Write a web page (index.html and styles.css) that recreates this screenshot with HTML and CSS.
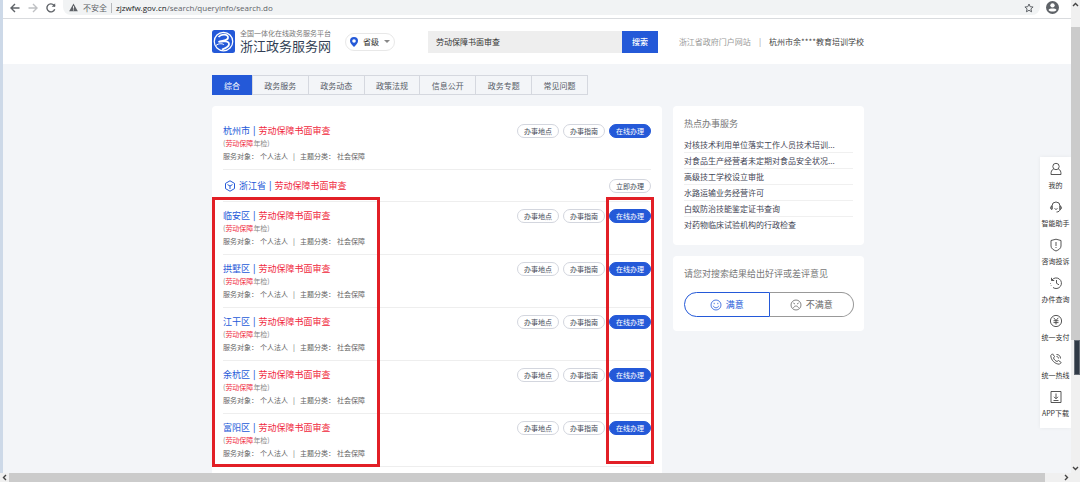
FILE: index.html
```
<!DOCTYPE html>
<html lang="zh-CN">
<head>
    <meta charset="UTF-8">
    <meta name="viewport" content="width=device-width, initial-scale=1.0">
    <title>浙江政务服务网</title>
    <link rel="stylesheet" href="styles.css">
</head>
<body>
    <div class="window">
        <div class="toolbar">
            <button class="nav-btn" aria-label="后退"><svg viewBox="0 0 12 12"><path d="M10.5 6H2M6 2L2 6l4 4"/></svg></button>
            <button class="nav-btn disabled" aria-label="前进"><svg viewBox="0 0 12 12"><path d="M1.500 6H10M6 2l4 4-4 4"/></svg></button>
            <button class="nav-btn" aria-label="刷新"><svg viewBox="0 0 12 12"><path d="M9.700 7.200A4 4 0 1 1 8.900 3.200L10 4.300"/><path d="M10.200 1.300v3.500H6.700z" class="solid"/></svg></button>
            <div class="address">
                <svg class="warn" viewBox="0 0 10 10"><path d="M5 .6L9.800 9.300H.2z" fill="#5f6368"/><path d="M5 3.500v2.800M5 7.200v1.100" stroke="#fff" stroke-width="1"/></svg>
                <span class="unsafe">不安全</span>
                <span class="url"><b>zjzwfw.gov.cn</b>/search/queryinfo/search.do</span>
                <svg class="star" viewBox="0 0 10 10"><path d="M5 1l1.200 2.700 2.900.3-2.200 1.900.7 2.900L5 7.300 2.400 8.800l.7-2.900L.9 4l2.900-.3z"/></svg>
            </div>
            <svg class="avatar" viewBox="0 0 12 12"><circle cx="6" cy="6" r="6" fill="#5f6368"/><circle cx="6" cy="4" r="2" fill="#fff"/><path d="M2.300 8.300C3 6.600 9 6.600 9.700 8.300 8.400 10.300 3.600 10.300 2.300 8.300z" fill="#fff"/></svg>
        </div>

        <div class="page">
            <header class="header">
                <div class="container header-inner">
                    <a class="logo" href="#">
                        <svg class="logo-mark" viewBox="0 0 46 46">
                            <rect width="46" height="46" rx="5" fill="#2459d8"/>
                            <circle cx="23" cy="23" r="18.500" fill="none" stroke="#fff" stroke-width="2.500"/>
                            <path d="M13 14C20 6 33 9 32 16c-1 6-14 5-19 8 8-2 22-3 21 5-1 6-9 8-14 10" fill="none" stroke="#fff" stroke-width="3.500"/>
                            <path d="M8 31c5-5 15-4 16-1" fill="none" stroke="#fff" stroke-width="2"/>
                        </svg>
                        <span class="logo-text">
                            <small>全国一体化在线政务服务平台</small>
                            <strong>浙江政务服务网</strong>
                        </span>
                    </a>
                    <button class="region">
                        <svg class="pin" viewBox="0 0 8 10"><path d="M4 0a4 4 0 0 0-4 4c0 2 2 4 4 6 2-2 4-4 4-6a4 4 0 0 0-4-4z" fill="#2459d8"/><circle cx="4" cy="4" r="1.800" fill="#fff"/></svg>
                        省级
                        <span class="caret"></span>
                    </button>
                    <form class="search">
                        <input type="text" value="劳动保障书面审查" aria-label="搜索内容">
                        <button type="button">搜索</button>
                    </form>
                    <div class="user-links">
                        <a href="#">浙江省政府门户网站</a>
                        <span>|</span>
                        <a class="user-name" href="#">杭州市余****教育培训学校</a>
                    </div>
                </div>
            </header>

            <main class="container">
                <nav class="tabs">
                    <a class="active" href="#">综合</a>
                    <a href="#">政务服务</a>
                    <a href="#">政务动态</a>
                    <a href="#">政策法规</a>
                    <a href="#">信息公开</a>
                    <a href="#">政务专题</a>
                    <a href="#">常见问题</a>
                </nav>

                <div class="columns">
                    <section class="card results">
                        <article class="item">
                            <div class="info">
                                <h3>杭州市 <i>|</i> <em>劳动保障书面审查</em></h3>
                                <p class="alias">(<em>劳动保障</em>年检)</p>
                                <p class="meta"><span>服务对象：</span><span>个人法人</span><span class="sep">|</span><span>主题分类：</span><span>社会保障</span></p>
                            </div>
                            <div class="actions"><button>办事地点</button><button>办事指南</button><button class="primary">在线办理</button></div>
                        </article>
                        <article class="item province">
                            <h3><svg class="cube" viewBox="0 0 12 12"><path d="M6 .8l4.500 2.600v5.200L6 11.200 1.500 8.600V3.400z"/><path d="M3.500 4.600L6 6l2.500-1.400M6 6v3"/></svg>浙江省 <i>|</i> <em>劳动保障书面审查</em></h3>
                            <div class="actions"><button>立即办理</button></div>
                        </article>

                        <div class="districts">
                            <article class="item">
                                <div class="info">
                                    <h3>临安区 <i>|</i> <em>劳动保障书面审查</em></h3>
                                    <p class="alias">(<em>劳动保障</em>年检)</p>
                                    <p class="meta"><span>服务对象：</span><span>个人法人</span><span class="sep">|</span><span>主题分类：</span><span>社会保障</span></p>
                                </div>
                                <div class="actions"><button>办事地点</button><button>办事指南</button><button class="primary">在线办理</button></div>
                            </article>
                            <article class="item">
                                <div class="info">
                                    <h3>拱墅区 <i>|</i> <em>劳动保障书面审查</em></h3>
                                    <p class="alias">(<em>劳动保障</em>年检)</p>
                                    <p class="meta"><span>服务对象：</span><span>个人法人</span><span class="sep">|</span><span>主题分类：</span><span>社会保障</span></p>
                                </div>
                                <div class="actions"><button>办事地点</button><button>办事指南</button><button class="primary">在线办理</button></div>
                            </article>
                            <article class="item">
                                <div class="info">
                                    <h3>江干区 <i>|</i> <em>劳动保障书面审查</em></h3>
                                    <p class="alias">(<em>劳动保障</em>年检)</p>
                                    <p class="meta"><span>服务对象：</span><span>个人法人</span><span class="sep">|</span><span>主题分类：</span><span>社会保障</span></p>
                                </div>
                                <div class="actions"><button>办事地点</button><button>办事指南</button><button class="primary">在线办理</button></div>
                            </article>
                            <article class="item">
                                <div class="info">
                                    <h3>余杭区 <i>|</i> <em>劳动保障书面审查</em></h3>
                                    <p class="alias">(<em>劳动保障</em>年检)</p>
                                    <p class="meta"><span>服务对象：</span><span>个人法人</span><span class="sep">|</span><span>主题分类：</span><span>社会保障</span></p>
                                </div>
                                <div class="actions"><button>办事地点</button><button>办事指南</button><button class="primary">在线办理</button></div>
                            </article>
                            <article class="item">
                                <div class="info">
                                    <h3>富阳区 <i>|</i> <em>劳动保障书面审查</em></h3>
                                    <p class="alias">(<em>劳动保障</em>年检)</p>
                                    <p class="meta"><span>服务对象：</span><span>个人法人</span><span class="sep">|</span><span>主题分类：</span><span>社会保障</span></p>
                                </div>
                                <div class="actions"><button>办事地点</button><button>办事指南</button><button class="primary">在线办理</button></div>
                            </article>
                            <div class="mark mark-names"></div>
                            <div class="mark mark-actions"></div>
                        </div>
                    </section>

                    <aside class="sidebar">
                        <section class="card hot">
                            <h2>热点办事服务</h2>
                            <ul>
                                <li><a href="#">对核技术利用单位落实工作人员技术培训...</a></li>
                                <li><a href="#">对食品生产经营者未定期对食品安全状况...</a></li>
                                <li><a href="#">高级技工学校设立审批</a></li>
                                <li><a href="#">水路运输业务经营许可</a></li>
                                <li><a href="#">白蚁防治技能鉴定证书查询</a></li>
                                <li><a href="#">对药物临床试验机构的行政检查</a></li>
                            </ul>
                        </section>
                        <section class="card feedback">
                            <h2>请您对搜索结果给出好评或差评意见</h2>
                            <div class="votes">
                                <button class="good"><svg viewBox="0 0 12 12"><circle cx="6" cy="6" r="5"/><path d="M4.200 3.800v1.400M7.800 3.800v1.400M3.300 6.800c.7 2.600 4.700 2.600 5.400 0"/></svg>满意</button>
                                <button class="bad"><svg viewBox="0 0 12 12"><circle cx="6" cy="6" r="5"/><path d="M3.300 4l1.700 1M8.700 4L7 5M3.500 8.800c.7-2.400 4.300-2.400 5 0"/></svg>不满意</button>
                            </div>
                        </section>
                    </aside>
                </div>
            </main>

            <nav class="side-tools">
                <a href="#"><svg viewBox="0 0 14 14"><circle cx="7" cy="4.500" r="3.200"/><path d="M4.600 7C2.500 8 2 9.500 2 12.500h10C12 9.500 11.500 8 9.400 7"/></svg>我的</a>
                <a href="#"><svg viewBox="0 0 14 14"><path d="M3 9V6a4 4 0 0 1 8 0v3c0 2-1.500 3-3.500 3M3 6C1 6 1 9.500 3 9.500zM11 6c2 0 2 3.500 0 3.500zM5.500 8.500c.8 1 2.200 1 3 0"/></svg>智能助手</a>
                <a href="#"><svg viewBox="0 0 14 14"><path d="M7 1.200l5 1.300V8c0 2.500-2.500 4-5 5-2.500-1-5-2.500-5-5V2.500zM7 4v4M7 9v1"/></svg>咨询投诉</a>
                <a href="#"><svg viewBox="0 0 14 14"><path d="M2.800 4.200A5.300 5.300 0 1 1 4 11.500M2.500 1.800v2.700h2.700M7.500 4v3.300l2.500 1.500M1.500 7v.6M2 9.300l.4.500"/></svg>办件查询</a>
                <a href="#"><svg viewBox="0 0 14 14"><circle cx="7" cy="7" r="5.600"/><path d="M4.700 3.800L7 6.500l2.300-2.700M7 6.500v4M4.500 6.700h5M4.500 8.600h5"/></svg>统一支付</a>
                <a href="#"><svg viewBox="0 0 14 14"><path d="M3.500 1.800L1.800 3.500C1.800 8 6 12.200 10.500 12.200l1.700-1.700-2.700-2-1.500 1C6.500 9 5 7.500 4.500 6l1-1.500zM7.500 4.500c1.200 0 2 .8 2 2M7.500 2.500c2.500 0 4 1.500 4 4"/></svg>统一热线</a>
                <a href="#"><svg viewBox="0 0 14 14"><path d="M2 1.500h10v11H2zM7 3.500v5M5 6.800l2 2 2-2M4.500 10.500h5"/></svg>APP下载</a>
            </nav>
        </div>
    </div>

    <div class="vscroll">
        <svg viewBox="0 0 9 9"><path d="M2 6l2.500-2.500L7 6"/></svg>
        <div class="vthumb"></div>
        <div class="grip"></div>
        <div class="vrest"></div>
        <svg viewBox="0 0 9 9"><path d="M2 3l2.500 2.500L7 3"/></svg>
    </div>
    <div class="hscroll">
        <svg viewBox="0 0 9 9"><path d="M6 2L3.500 4.500 6 7"/></svg>
        <div class="hthumb"></div>
        <svg viewBox="0 0 9 9"><path d="M3 2l2.500 2.500L3 7"/></svg>
    </div>
</body>
</html>
```
FILE: styles.css
```
* {
    box-sizing: border-box;
}

body {
    margin: 0;
    height: 100vh;
    overflow: hidden;
    display: grid;
    grid-template-columns: 1fr 9px;
    grid-template-rows: minmax(0, 1fr) 9px;
    font-family: "Noto Sans CJK SC", "Noto Sans", sans-serif;
    font-size: 8px;
    color: #555b66;
    background-color: #f0f0f0;
}

h2, h3, p, ul {
    margin: 0;
    padding: 0;
    font-weight: normal;
}

em, i {
    font-style: normal;
}

a {
    color: inherit;
    text-decoration: none;
}

button, input {
    font: inherit;
    color: inherit;
    border: none;
    padding: 0;
    margin: 0;
    background: none;
}

svg {
    flex: none;
    fill: none;
}

/* browser window */
.window {
    display: flex;
    flex-direction: column;
    min-height: 0;
    border-left: 3px solid #cdd9e8;
}

.toolbar {
    flex: none;
    display: flex;
    align-items: flex-start;
    gap: 6px;
    height: 19px;
    padding: 0 12px 0 6px;
    background-color: #fff;
    border-bottom: 1px solid #d9dbde;
}

.nav-btn {
    width: 12px;
    height: 15px;
}

.nav-btn svg {
    display: block;
    width: 12px;
    height: 12px;
    stroke: #5f6368;
    stroke-width: 1.4;
}

.nav-btn.disabled svg {
    stroke: #bfc1c4;
}

.nav-btn .solid {
    fill: #5f6368;
    stroke: none;
}

.address {
    flex: 1;
    display: flex;
    align-items: center;
    height: 15px;
    padding: 0 6px;
    border-radius: 0 0 8px 8px;
    background-color: #f1f3f4;
    color: #5f6368;
}

.warn {
    width: 9px;
    height: 9px;
}

.unsafe {
    margin-left: 5px;
    padding-right: 4px;
    line-height: 10px;
    border-right: 1px solid #b5b8bc;
}

.url {
    margin-left: 4px;
    font-family: "Open Sans", "Noto Sans", sans-serif;
    font-size: 8px;
}

.url b {
    font-weight: normal;
    color: #202124;
}

.star {
    width: 10px;
    height: 10px;
    margin-left: auto;
    stroke: #5f6368;
}

.avatar {
    width: 13px;
    height: 13px;
    margin-top: 1px;
}

.page {
    position: relative;
    flex: 1;
    min-height: 0;
    overflow: hidden;
    background-color: #f3f5f8;
}

.container {
    width: 654px;
    max-width: 100%;
    margin: 0 auto;
    padding-left: 2px;
}

/* site header */
.header {
    background-color: #fff;
}

.header-inner {
    display: flex;
    align-items: center;
    height: 45px;
}

.logo {
    display: flex;
    align-items: center;
    gap: 5px;
}

.logo-mark {
    width: 23px;
    height: 23px;
}

.logo-text {
    display: flex;
    flex-direction: column;
}

.logo-text small {
    font-size: 7px;
    line-height: 9px;
    color: #777;
}

.logo-text strong {
    font-size: 13px;
    line-height: 16px;
    font-weight: 400;
    color: #333f55;
}

.region {
    display: flex;
    align-items: center;
    gap: 5px;
    height: 18px;
    margin-left: 14px;
    padding: 0 4px;
    border: 1px solid #e8e8e8;
    border-radius: 9px;
    color: #333;
}

.pin {
    width: 8px;
    height: 10px;
}

.caret {
    border: 3px solid transparent;
    border-top-color: #888;
    border-bottom: none;
}

.search {
    display: flex;
    width: 230px;
    height: 22px;
    margin-left: 33px;
}

.search input {
    flex: 1;
    min-width: 0;
    padding: 0 8px;
    background-color: #eee;
    color: #333;
}

.search button {
    width: 36px;
    background-color: #2459d8;
    color: #fff;
    font-weight: 500;
}

.user-links {
    display: flex;
    gap: 8px;
    margin-left: auto;
    color: #999;
    white-space: nowrap;
}

.user-name {
    color: #444;
}

/* tabs */
.tabs {
    display: flex;
    width: 376px;
    height: 20px;
    margin-top: 11px;
    border: 1px solid #d5d8df;
}

.tabs a {
    width: 56px;
    line-height: 20px;
    text-align: center;
    border-left: 1px solid #d5d8df;
}

.tabs .active {
    width: 40px;
    margin: -1px 0 -1px -1px;
    line-height: 22px;
    border-left: none;
    background-color: #2459d8;
    color: #fff;
}

.columns {
    display: grid;
    grid-template-columns: 1fr 191px;
    align-items: start;
    gap: 11px;
    margin-top: 11px;
}

.card {
    padding: 11px;
    background-color: #fff;
    border-radius: 4px;
}

/* search results */
.results {
    padding-bottom: 40px;
}

.item {
    display: flex;
    justify-content: space-between;
    align-items: flex-start;
    height: 53px;
    padding-top: 6px;
    border-bottom: 1px solid #eee;
}

.item h3 {
    font-size: 9px;
    line-height: 16px;
    color: #2459d8;
}

.item i {
    font-weight: 500;
}

.info i {
    margin: 0 1px;
}

.item em {
    color: #f0283c;
}

.alias {
    font-size: 7px;
    line-height: 8px;
    color: #888;
}

.meta {
    display: flex;
    gap: 2px;
    font-size: 7px;
    line-height: 18px;
    color: #666;
}

.meta .sep {
    margin: 0 3px;
}

.actions {
    display: flex;
    gap: 4px;
}

.actions button {
    width: 42px;
    height: 14px;
    margin-top: 1px;
    border: 1px solid #d3d6de;
    border-radius: 7px;
    font-size: 7px;
    line-height: 12px;
    color: #444a57;
}

.actions .primary {
    border-color: #2459d8;
    background-color: #2459d8;
    color: #fff;
}

.province {
    align-items: center;
    height: 32px;
    padding: 0;
}

.province h3 {
    display: flex;
    align-items: center;
    gap: 3px;
    padding-left: 1px;
}

.cube {
    width: 12px;
    height: 12px;
    stroke: #2459d8;
}

.districts {
    position: relative;
}

.mark {
    position: absolute;
    top: -5px;
    border: 3px solid #e21f26;
    pointer-events: none;
}

.mark-names {
    left: -11px;
    bottom: 0;
    width: 168px;
}

.mark-actions {
    right: -3px;
    bottom: 3px;
    width: 48px;
}

/* right column */
.sidebar {
    display: grid;
    gap: 11px;
}

.card h2 {
    font-size: 9px;
    line-height: 14px;
    color: #777;
}

.hot {
    padding-bottom: 13px;
}

.hot ul {
    list-style: none;
    margin-top: 6px;
}

.hot li {
    line-height: 15px;
    border-bottom: 1px solid #f0f0f0;
    white-space: nowrap;
    color: #3f4454;
}

.hot li:last-child {
    border-bottom: none;
}

.votes {
    display: flex;
    height: 25px;
    margin: 11px -1px 3px 0;
}

.votes button {
    flex: 1;
    display: flex;
    align-items: center;
    justify-content: center;
    gap: 4px;
    border: 1px solid #999;
    font-size: 9px;
    color: #666;
}

.votes svg {
    width: 12px;
    height: 12px;
    stroke: currentColor;
    stroke-width: 0.8;
}

.votes .good {
    border-color: #2459d8;
    border-radius: 13px 0 0 13px;
    color: #2459d8;
}

.votes .bad {
    border-left: none;
    border-radius: 0 13px 13px 0;
}

/* floating tools over the page edge */
.side-tools {
    position: absolute;
    top: 138px;
    right: 0;
    width: 31px;
    padding-top: 5px;
    background-color: #fff;
    box-shadow: 0 0 4px rgba(0, 0, 0, 0.06);
}

.side-tools a {
    display: flex;
    flex-direction: column;
    align-items: center;
    height: 38px;
    font-size: 7px;
    line-height: 14px;
    color: #333;
    white-space: nowrap;
}

.side-tools svg {
    width: 14px;
    height: 14px;
    margin-bottom: 2px;
    stroke: #444;
    stroke-width: 0.9;
}

/* scrollbars */
.vscroll {
    display: flex;
    flex-direction: column;
    align-items: stretch;
}

.vscroll svg, .hscroll svg {
    width: 9px;
    height: 9px;
    stroke: #444;
    stroke-width: 1.4;
}

.vthumb {
    flex: 314;
    margin-top: 18px;
    background-color: #cbcbcb;
}

.grip {
    flex: 34;
    margin-left: 3px;
    border: 1px solid #666d76;
    background-color: #303a46;
}

.vrest {
    flex: 89;
}

.hscroll {
    grid-column: 1 / -1;
    display: flex;
    padding-right: 9px;
}

.hthumb {
    flex: 1;
    margin-right: 17px;
    background-color: #cbcbcb;
}
```
